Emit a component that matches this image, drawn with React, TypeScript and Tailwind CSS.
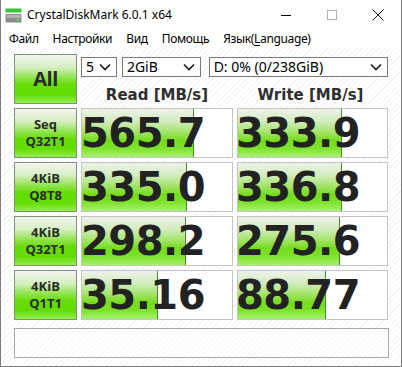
import { Fragment } from 'react';
import type { ReactNode } from 'react';

const rows = [
  { a: 'Seq', b: 'Q32T1', read: '565.7', write: '333.9', rw: 112, ww: 104 },
  { a: '4KiB', b: 'Q8T8', read: '335.0', write: '336.8', rw: 105, ww: 104 },
  { a: '4KiB', b: 'Q32T1', read: '298.2', write: '275.6', rw: 104, ww: 102 },
  { a: '4KiB', b: 'Q1T1', read: '35.16', write: '88.77', rw: 76, ww: 88 },
];

const ui = "font-['Noto_Sans','Open_Sans',sans-serif]";

function Chevron() {
  return (
    <svg width="12" height="8" viewBox="0 0 12 8" className="shrink-0">
      <polyline points="1,1.5 6,6.5 11,1.5" fill="none" stroke="#1a1a1a" strokeWidth="1.6" />
    </svg>
  );
}

function Select({ w, children }: { w: string; children: ReactNode }) {
  return (
    <div className={`${w} h-[20px] flex items-center justify-between pl-[4px] pr-[5px] border border-[#7a7a7a] bg-white text-[14px] text-black leading-none ${ui}`}>
      <span>{children}</span>
      <Chevron />
    </div>
  );
}

function GreenBox({ children }: { children: ReactNode }) {
  return (
    <div className="flex flex-col items-center justify-center border border-[#7f927f] bg-[linear-gradient(to_bottom,#f3f6f0_0%,#d8efc4_25%,#8ee34a_48%,#66dc06_62%,#62dc00_82%,#93ee4e_100%)] text-[#2b2b2b] font-['Open_Sans',sans-serif] font-bold">
      {children}
    </div>
  );
}

function ValueBox({ value, width }: { value: string; width: number }) {
  return (
    <div className="relative flex items-center justify-end pr-[27px] border border-[#c4c4c4] bg-white overflow-hidden">
      <div
        className="absolute left-0 top-0 bottom-0 border-r border-[#3f8f24] bg-[linear-gradient(to_bottom,#edf2ea_0%,#d4ecc0_25%,#a4e46a_48%,#74dc1c_66%,#7ee32c_82%,#a8f06e_100%)]"
        style={{ width }}
      />
      <span className="relative text-[40px] leading-none font-bold text-[#222] font-['DejaVu_Sans',sans-serif] tracking-[-0.5px]">
        {value}
      </span>
    </div>
  );
}

export default function App() {
  return (
    <div className={`w-[402px] h-[367px] flex flex-col bg-white border-x border-b border-[#7d7d7d] overflow-hidden ${ui}`}>
      {/* Title bar */}
      <div className="h-[30px] flex items-center shrink-0">
        <svg width="17" height="15" viewBox="0 0 17 15" className="ml-[4px] mr-[5px]">
          <rect x="0.5" y="0.5" width="16" height="4" fill="#39c43a" />
          <rect x="0.5" y="6" width="16" height="8.5" fill="#8c8c8c" />
          <rect x="1.5" y="7" width="14" height="3" fill="#b4b4b4" />
          <rect x="11" y="11" width="3" height="1.5" fill="#4ee04e" />
        </svg>
        <span className="text-[12px] text-black">CrystalDiskMark 6.0.1 x64</span>
        <div className="ml-auto flex h-full">
          <div className="w-[46px] flex items-center justify-center">
            <div className="w-[10px] h-px bg-black" />
          </div>
          <div className="w-[46px] flex items-center justify-center">
            <div className="w-[10px] h-[10px] border border-[#b0b0b0]" />
          </div>
          <div className="w-[46px] flex items-center justify-center">
            <svg width="12" height="12" viewBox="0 0 12 12">
              <path d="M0.5 0.5 L11.5 11.5 M11.5 0.5 L0.5 11.5" stroke="#111" strokeWidth="1" />
            </svg>
          </div>
        </div>
      </div>

      {/* Menu bar */}
      <div className="h-[18px] flex items-center text-[12px] tracking-[-0.35px] text-black shrink-0 pl-[8px] gap-[14px]">
        <span>Файл</span>
        <span>Настройки</span>
        <span>Вид</span>
        <span>Помощь</span>
        <span>
          Язык(<span className="underline underline-offset-2">L</span>anguage)
        </span>
      </div>

      {/* Main */}
      <div className="flex-1 flex flex-col pl-[13px] pt-[6px] bg-[repeating-linear-gradient(135deg,#ffffff_0px,#ffffff_3px,#f4f4f4_3px,#f4f4f4_4px)]">
        <div className="grid grid-cols-[63px_152px_151px] grid-rows-[50px_50px_50px_50px_50px] gap-x-[4px] gap-y-[4px]">
          <GreenBox>
            <span className="text-[20px] leading-none tracking-[-0.5px]">All</span>
          </GreenBox>
          <div className="col-span-2 flex flex-col">
            <div className="flex gap-[5px] mt-[3px]">
              <Select w="w-[36px]">5</Select>
              <Select w="w-[79px] mr-[3px]">2GiB</Select>
              <Select w="w-[180px]">D: 0% (0/238GiB)</Select>
            </div>
            <div className="flex mt-[7px] text-[15px] font-bold text-[#2f2f2f] font-['DejaVu_Sans',sans-serif]">
              <div className="w-[152px] text-center">Read [MB/s]</div>
              <div className="w-[155px] text-center">Write [MB/s]</div>
            </div>
          </div>
          {rows.map((r) => (
            <Fragment key={r.b + r.read}>
              <GreenBox>
                <span className="text-[13px] leading-[17px]">{r.a}</span>
                <span className="text-[13px] leading-[17px]">{r.b}</span>
              </GreenBox>
              <ValueBox value={r.read} width={r.rw} />
              <ValueBox value={r.write} width={r.ww} />
            </Fragment>
          ))}
        </div>
        <div className="w-[375px] h-[30px] mt-[8px] border border-[#a8a8a8] bg-white/40" />
      </div>
    </div>
  );
}
